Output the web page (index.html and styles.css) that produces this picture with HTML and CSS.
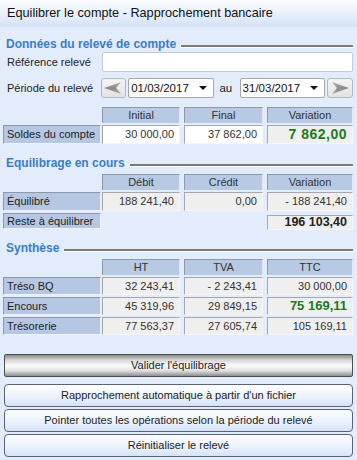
FILE: index.html
```html
<!DOCTYPE html>
<html lang="fr">
<head>
<meta charset="utf-8">
<title>Equilibrer le compte</title>
<link rel="stylesheet" href="styles.css">
</head>
<body>
<div class="win">
  <div class="titlebar">Equilibrer le compte - Rapprochement bancaire</div>
  <div class="content">
    <div class="sec sec1"><span class="sec-t">Données du relevé de compte</span><span class="sec-l"></span></div>
    <div class="frow ref">
      <span class="flabel">Référence relevé</span>
      <div class="input"></div>
    </div>
    <div class="frow per">
      <span class="flabel">Période du relevé</span>
      <div class="arrow-btn"><svg width="20" height="14" viewBox="0 0 20 14"><defs><linearGradient id="ga" x1="0" y1="0" x2="0" y2="1"><stop offset="0" stop-color="#b8b8b8"/><stop offset="0.5" stop-color="#8a8a8a"/><stop offset="1" stop-color="#a8a8a8"/></linearGradient></defs><polygon points="1,7 18,1 13,7 18,13" fill="url(#ga)"/></svg></div>
      <div class="combo"><span>01/03/2017</span><i class="caret"></i></div>
      <span class="au">au</span>
      <div class="combo"><span>31/03/2017</span><i class="caret"></i></div>
      <div class="arrow-btn"><svg width="20" height="14" viewBox="0 0 20 14"><polygon points="19,7 2,1 7,7 2,13" fill="url(#ga)"/></svg></div>
    </div>

    <div class="grid g1">
      <div></div><div class="hd">Initial</div><div class="hd">Final</div><div class="hd last">Variation</div>
      <div class="lb">Soldes du compte</div><div class="v white">30 000,00</div><div class="v white">37 862,00</div><div class="v gray last green big">7 862,00</div>
    </div>

    <div class="sec sec2"><span class="sec-t">Equilibrage en cours</span><span class="sec-l"></span></div>
    <div class="grid g2">
      <div></div><div class="hd">Débit</div><div class="hd">Crédit</div><div class="hd last">Variation</div>
      <div class="lb">Équilibré</div><div class="v gray">188 241,40</div><div class="v gray">0,00</div><div class="v gray last">- 188 241,40</div>
      <div class="lb short">Reste à équilibrer</div><div></div><div></div><div class="v gray last bold short">196 103,40</div>
    </div>

    <div class="sec sec3"><span class="sec-t">Synthèse</span><span class="sec-l"></span></div>
    <div class="grid g3">
      <div></div><div class="hd">HT</div><div class="hd">TVA</div><div class="hd last">TTC</div>
      <div class="lb">Tréso BQ</div><div class="v gray">32 243,41</div><div class="v gray">- 2 243,41</div><div class="v gray last">30 000,00</div>
      <div class="lb">Encours</div><div class="v gray">45 319,96</div><div class="v gray">29 849,15</div><div class="v gray last green">75 169,11</div>
      <div class="lb">Trésorerie</div><div class="v gray">77 563,37</div><div class="v gray">27 605,74</div><div class="v gray last">105 169,11</div>
    </div>

    <div class="buttons">
      <div class="btn primary">Valider l'équilibrage</div>
      <div class="btn blue first">Rapprochement automatique à partir d'un fichier</div>
      <div class="btn blue">Pointer toutes les opérations selon la période du relevé</div>
      <div class="btn blue">Réinitialiser le relevé</div>
    </div>
  </div>
</div>
</body>
</html>
```
FILE: styles.css
```css
* { box-sizing: border-box; }
html, body { margin: 0; padding: 0; }
body {
  width: 357px;
  height: 460px;
  background: #e2ecfa;
  font-family: "Liberation Sans", Arial, sans-serif;
  font-size: 11px;
  color: #222;
  overflow: hidden;
}
.win { width: 357px; }
.titlebar {
  height: 27px;
  padding: 0 0 0 7px;
  line-height: 26px;
  font-size: 12.7px;
  color: #111;
  white-space: nowrap;
  background: linear-gradient(#fbfcfe 0%, #eaf1fb 45%, #d3e2f7 100%);
}
.content { padding: 0 4px 0 3px; }
.sec {
  display: flex;
  align-items: center;
  height: 16px;
}
.sec1 { margin-top: 9px; }
.sec2 { margin-top: 11px; }
.sec3 { margin-top: 10px; }
.sec-t {
  font-weight: bold;
  font-size: 12px;
  color: #3b7dc4;
  padding-left: 3px;
  white-space: nowrap;
}
.sec-l {
  flex: 1;
  margin-left: 5px;
  margin-top: 5px;
  height: 3px;
  border-top: 2px solid #7a7a7a;
  border-bottom: 1px solid #ffffff;
}
.frow { display: flex; align-items: center; }
.flabel { width: 99px; padding-left: 4px; font-size: 11px; color: #222; white-space: nowrap; }
.ref { height: 20px; }
.input {
  flex: 1;
  height: 20px;
  background: #fff;
  border: 1px solid #c6ccd6;
  border-radius: 2px;
}
.per { margin-top: 6px; height: 20px; }
.arrow-btn {
  width: 26px;
  height: 20px;
  border: 1px solid #b3b8c0;
  border-radius: 3px;
  background: linear-gradient(#f4f4f4, #e2e2e2);
  display: flex;
  align-items: center;
  justify-content: center;
}
.combo {
  width: 87px;
  height: 20px;
  margin-left: 2px;
  background: #fff;
  border: 1px solid #a6a6a6;
  border-radius: 2px;
  display: flex;
  align-items: center;
  padding-left: 2px;
  font-size: 11.5px;
  color: #111;
}
.combo span { flex: 1; }
.caret {
  width: 0; height: 0;
  border-left: 4px solid transparent;
  border-right: 4px solid transparent;
  border-top: 4px solid #111;
  margin-right: 6px;
}
.combo + .arrow-btn { margin-left: 2px; }
.au { width: 24px; text-align: center; font-size: 11.5px; color: #222; }

.grid {
  display: grid;
  grid-template-columns: 99px 82px 83px 86px;
  row-gap: 2px;
  white-space: nowrap;
}
.g1 { margin-top: 9px; }
.g2 { margin-top: 3px; }
.g3 { margin-top: 3px; }
.hd {
  height: 16px;
  margin-right: 4px;
  background: #b7c9e3;
  border-top: 1px solid #8c98ab;
  border-left: 1px solid #8c98ab;
  border-right: 1px solid #dfe7f3;
  text-align: center;
  font-size: 11px;
  line-height: 15px;
  color: #333;
}
.hd.last, .v.last { margin-right: 0; }
.lb {
  height: 19px;
  margin-right: 1px;
  background: #b5c7e2;
  border: 1px solid #8c98ab;
  border-right-color: #eef3fa;
  border-bottom-color: #eef3fa;
  padding-left: 3px;
  font-size: 11px;
  line-height: 17px;
  color: #222;
}
.lb.short { height: 16px; line-height: 14px; }
.v {
  height: 19px;
  margin-right: 4px;
  border: 1px solid #a4a8ae;
  border-right-color: #f4f6f9;
  border-bottom-color: #f4f6f9;
  text-align: right;
  padding-right: 5px;
  font-size: 11px;
  line-height: 17px;
  color: #333;
}
.g3 .lb, .g3 .v { height: 18px; line-height: 16px; }
.v.short { height: 15px; line-height: 13px; margin-top: 2px; }
.white { background: #ffffff; }
.gray { background: #efefef; }
.green { color: #1e7a22; font-weight: bold; font-size: 13px; }
.green.big { font-size: 14px; letter-spacing: 0.5px; }
.bold { font-weight: bold; font-size: 12.5px; color: #222; }

.buttons { margin-top: 19px; display: flex; flex-direction: column; }
.btn {
  height: 23px;
  text-align: center;
  font-size: 11px;
  line-height: 21px;
  color: #222;
  white-space: nowrap;
}
.primary {
  margin-left: 1px;
  border: 1px solid #4e4e4e;
  border-radius: 2px;
  background: linear-gradient(#8a8a8a 0%, #d8d8d8 25%, #fbfbfb 50%, #e0e0e0 75%, #8e8e8e 100%);
}
.blue {
  margin-left: 1px;
  margin-top: 2px;
  border: 1px solid #5a6275;
  border-radius: 4px;
  background: linear-gradient(#fdfeff 0%, #eef4fd 50%, #d4e3f8 100%);
}
.blue.first { margin-top: 7px; }
```
